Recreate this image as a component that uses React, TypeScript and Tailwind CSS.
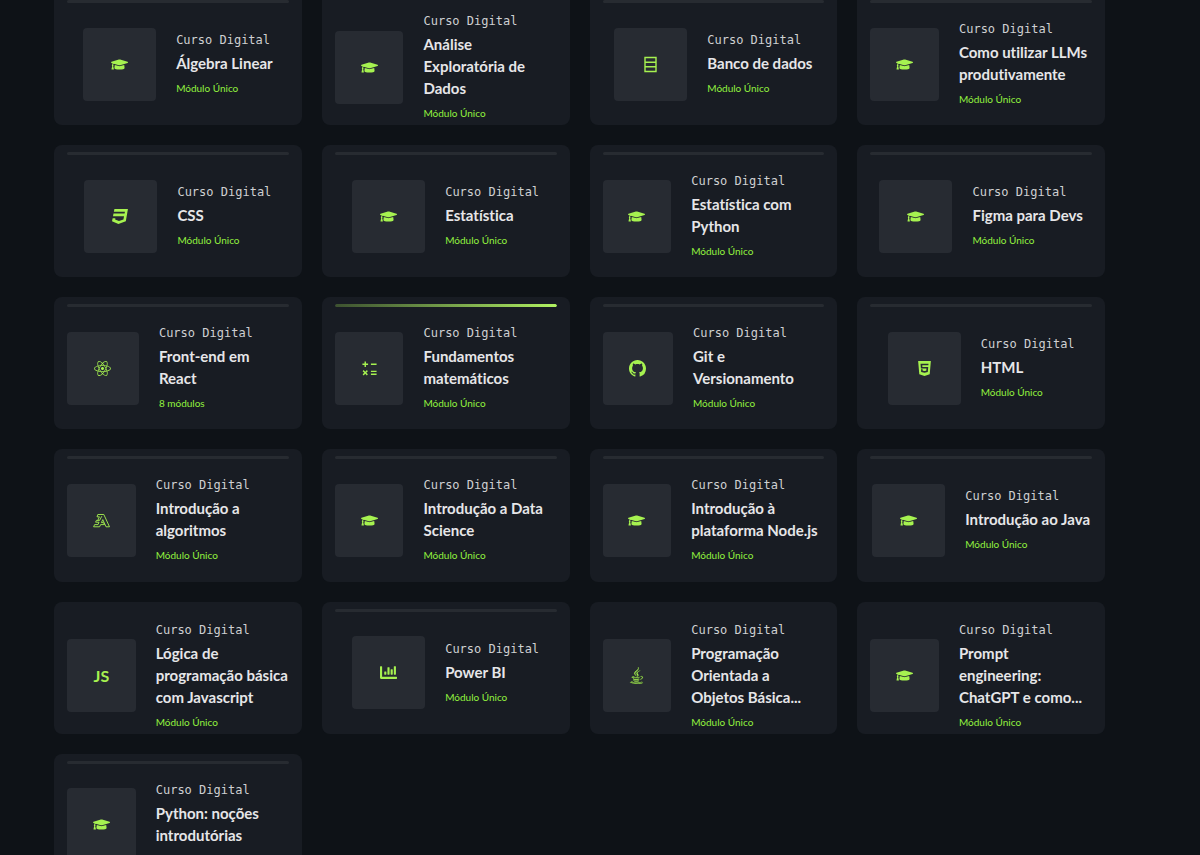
import type { ReactNode } from "react";
import { FaGraduationCap, FaCss3, FaReact, FaChartBar, FaHtml5, FaJava } from "react-icons/fa";
import { BiMath } from "react-icons/bi";
import { BsGithub } from "react-icons/bs";

type Course = {
  title: string;
  modules?: string;
  icon?: ReactNode;
  progress?: number | null;
};

function DatabaseIcon() {
  return (
    <svg viewBox="0 0 17 17" className="size-[17px]" fill="none" stroke="currentColor" strokeWidth="1.4" aria-hidden="true">
      <path d="M3 1.5h11v14H3zM3 6.2h11M3 10.8h11" />
    </svg>
  );
}

function AlgorithmIcon() {
  return (
    <svg viewBox="0 0 17 17" className="size-[17px]" fill="none" stroke="currentColor" strokeWidth="0.9" strokeLinejoin="round" aria-hidden="true">
      <path d="M4.8 2.5H10.8L16.5 14.8H13L9.8 7.6L8.4 10.6H10.4L11.6 12.6H7.6L6.6 14.8H.6L1.6 12.6H5L6 10.2H2.6L3.4 8.4H6.6L8.8 4.2M4.8 2.5L4 4.8H6.4L4.8 8.4" />
    </svg>
  );
}

const courses: Course[] = [
  { title: "Álgebra Linear" },
  { title: "Análise Exploratória de Dados", progress: null },
  { title: "Banco de dados", icon: <DatabaseIcon /> },
  { title: "Como utilizar LLMs produtivamente" },
  { title: "CSS", icon: <FaCss3 /> },
  { title: "Estatística" },
  { title: "Estatística com Python" },
  { title: "Figma para Devs" },
  { title: "Front-end em React", modules: "8 módulos", icon: <FaReact /> },
  { title: "Fundamentos matemáticos", icon: <BiMath />, progress: 100 },
  { title: "Git e Versionamento", icon: <BsGithub /> },
  { title: "HTML", icon: <FaHtml5 /> },
  { title: "Introdução a algoritmos", icon: <AlgorithmIcon /> },
  { title: "Introdução a Data Science" },
  { title: "Introdução à plataforma Node.js" },
  { title: "Introdução ao Java" },
  {
    title: "Lógica de programação básica com Javascript",
    icon: <span className="text-base font-bold">JS</span>,
    progress: null,
  },
  { title: "Power BI", icon: <FaChartBar /> },
  { title: "Programação Orientada a Objetos Básica...", icon: <FaJava strokeWidth={8} />, progress: null },
  { title: "Prompt engineering: ChatGPT e como...", progress: null },
  { title: "Python: noções introdutórias" },
];

function CourseCard({ title, modules = "Módulo Único", icon = <FaGraduationCap />, progress = 0 }: Course) {
  return (
    <li className="flex aspect-[15/8] min-h-0 flex-col overflow-hidden rounded-lg bg-[#181c23] px-[13px]">
      {progress === null ? (
        <div className="h-4 shrink-0" />
      ) : (
        <div className="mt-[7px] h-[3px] shrink-0 overflow-hidden rounded-full bg-[#272b31]">
          <div
            className="h-full rounded-full bg-linear-to-r from-[#3d5230] to-[#b1f361]"
            style={{ width: `${progress}%` }}
          />
        </div>
      )}
      <div className="flex min-h-0 flex-1 items-center justify-center">
        <div className="flex h-[73px] w-[73px] items-center justify-center rounded bg-[#272b32] text-[17px] text-[#a6f250]">
          {icon}
        </div>
        <div className="ml-5 max-w-[60%]">
          <p className="font-['DejaVu_Sans_Mono',monospace] text-[12px] leading-[18px] whitespace-nowrap text-[#cfd0d2]">
            Curso Digital
          </p>
          <h2 className="mt-[3px] mb-[5px] text-[15px] leading-[22px] font-bold text-[#e6e6e8] [font-variant-ligatures:none]">{title}</h2>
          <p className="text-[10px] leading-[18px] text-[#92f23f]">{modules}</p>
        </div>
      </div>
    </li>
  );
}

export default function App() {
  return (
    <main className="h-screen overflow-hidden bg-[#0e1217] font-[Lato,sans-serif]">
      <ul className="-mt-[7px] mr-[95px] ml-[54px] grid grid-cols-4 gap-5">
        {courses.map((course) => (
          <CourseCard key={course.title} {...course} />
        ))}
      </ul>
    </main>
  );
}
